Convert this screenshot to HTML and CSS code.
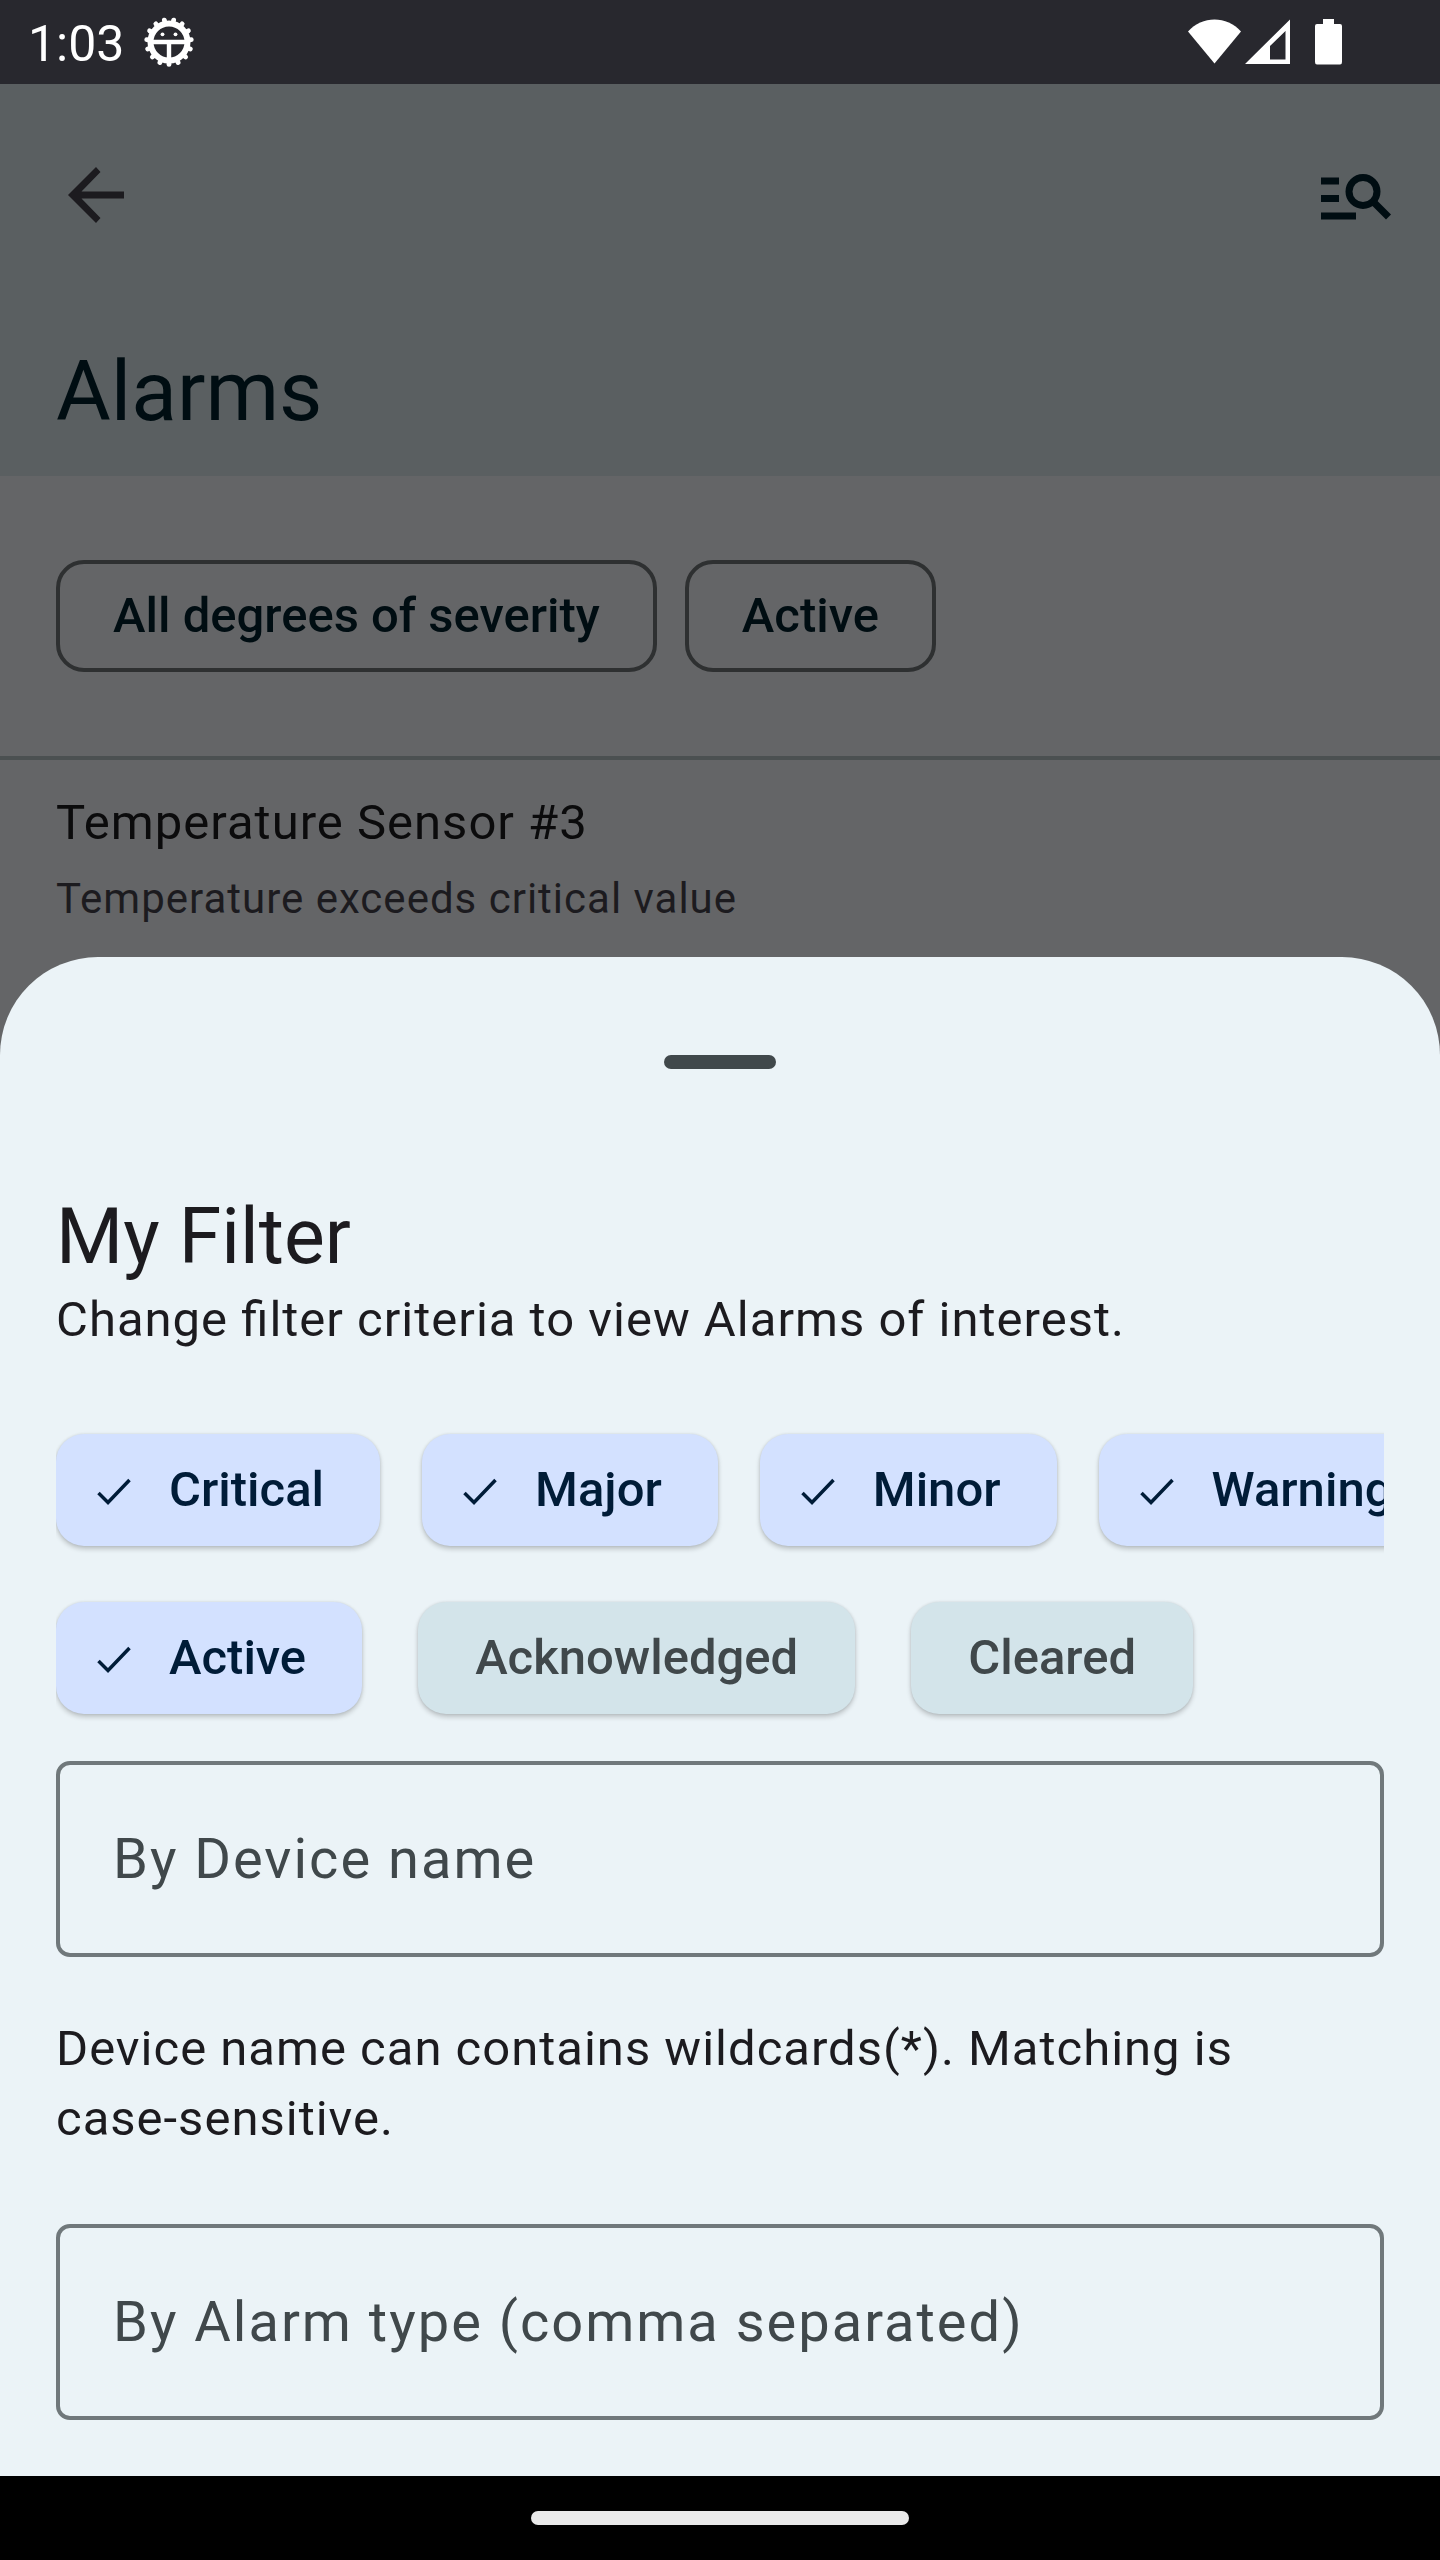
FILE: index.html
```html
<!DOCTYPE html>
<html lang="en">
<head>
<meta charset="utf-8">
<meta name="viewport" content="width=device-width, initial-scale=1">
<title>Alarms</title>
<link rel="stylesheet" href="styles.css">
</head>
<body>
<div class="screen">
  <div class="status-bar">
    <div class="status-left">
      <span class="clock">1:03</span>
      <svg class="gear-icon" viewBox="0 0 50 50" aria-hidden="true">
        <circle cx="25" cy="25" r="18.5" fill="none" stroke="#fff" stroke-width="6"/>
        <g stroke="#fff" stroke-width="4.8" stroke-linecap="round">
          <path d="M25 44V47.4" />
          <path d="M25 44V47.4" transform="rotate(24 25 25)"/>
          <path d="M25 44V47.4" transform="rotate(48 25 25)"/>
          <path d="M25 44V47.4" transform="rotate(72 25 25)"/>
          <path d="M25 44V47.4" transform="rotate(96 25 25)"/>
          <path d="M25 44V47.4" transform="rotate(120 25 25)"/>
          <path d="M25 44V47.4" transform="rotate(144 25 25)"/>
          <path d="M25 44V47.4" transform="rotate(168 25 25)"/>
          <path d="M25 44V47.4" transform="rotate(192 25 25)"/>
          <path d="M25 44V47.4" transform="rotate(216 25 25)"/>
          <path d="M25 44V47.4" transform="rotate(240 25 25)"/>
          <path d="M25 44V47.4" transform="rotate(264 25 25)"/>
          <path d="M25 44V47.4" transform="rotate(288 25 25)"/>
          <path d="M25 44V47.4" transform="rotate(312 25 25)"/>
          <path d="M25 44V47.4" transform="rotate(336 25 25)"/>
        </g>
        <path d="M8 25H42M25 25V43" stroke="#fff" stroke-width="4.4"/>
        <circle cx="18.5" cy="17.3" r="1.9" fill="#fff"/>
        <circle cx="31.5" cy="17.3" r="1.9" fill="#fff"/>
      </svg>
    </div>
    <svg class="system-icons" viewBox="0 0 156 48" aria-hidden="true">
      <path d="M0 13.5C14-2.500 39-2.500 53 13.500L26.500 45.500Z" fill="#fff"/>
      <path fill-rule="evenodd" d="M57 46L102 1.500V46ZM82 28V41.500H97.500V13Z" fill="#fff"/>
      <path d="M135 1H146V6H152Q154 6 154 8V44Q154 46.500 152 46.500H129Q127 46.500 127 44V8Q127 6 129 6H135Z" fill="#fff"/>
    </svg>
  </div>

  <header class="app-bar">
    <div class="toolbar">
      <button class="icon-button" type="button" aria-label="Back">
        <svg class="back-icon" viewBox="0 0 56 56" aria-hidden="true">
          <path d="M56 24.500H13.500L32.500 5L28 0L0 28L28 56L32.500 51L13.500 31.500H56Z" fill="currentColor"/>
        </svg>
      </button>
      <button class="icon-button" type="button" aria-label="Filter alarms">
        <svg class="filter-icon" viewBox="0 -4 70 50" aria-hidden="true">
          <path d="M0 3.500H18V10.500H0ZM0 21H18V28H0ZM0 38.500H35V45.500H0Z" fill="currentColor"/>
          <circle cx="42" cy="17.500" r="14" fill="none" stroke="currentColor" stroke-width="7"/>
          <path d="M52 27.500L67.500 43" stroke="currentColor" stroke-width="7"/>
        </svg>
      </button>
    </div>
    <h1 class="page-title">Alarms</h1>
  </header>

  <main class="content">
    <div class="summary">
      <button class="outlined" type="button">All degrees of severity</button>
      <button class="outlined" type="button">Active</button>
    </div>
    <article class="alarm">
      <h2 class="alarm-source">Temperature Sensor #3</h2>
      <p class="alarm-text">Temperature exceeds critical value</p>
    </article>
  </main>

  <section class="sheet" aria-labelledby="sheet-title">
    <div class="handle"></div>
    <h2 class="sheet-title" id="sheet-title">My Filter</h2>
    <p class="body-text">Change filter criteria to view Alarms of interest.</p>

    <div class="chips severity">
      <button class="chip selected" type="button" aria-pressed="true"><svg class="check" viewBox="0 -4 34 32" aria-hidden="true"><path d="M1.500 15L11 24.500L32.500 2" fill="none" stroke="currentColor" stroke-width="3.500"/></svg>Critical</button>
      <button class="chip selected" type="button" aria-pressed="true"><svg class="check" viewBox="0 -4 34 32" aria-hidden="true"><path d="M1.500 15L11 24.500L32.500 2" fill="none" stroke="currentColor" stroke-width="3.500"/></svg>Major</button>
      <button class="chip selected" type="button" aria-pressed="true"><svg class="check" viewBox="0 -4 34 32" aria-hidden="true"><path d="M1.500 15L11 24.500L32.500 2" fill="none" stroke="currentColor" stroke-width="3.500"/></svg>Minor</button>
      <button class="chip selected" type="button" aria-pressed="true"><svg class="check" viewBox="0 -4 34 32" aria-hidden="true"><path d="M1.500 15L11 24.500L32.500 2" fill="none" stroke="currentColor" stroke-width="3.500"/></svg>Warning</button>
    </div>

    <div class="chips state">
      <button class="chip selected" type="button" aria-pressed="true"><svg class="check" viewBox="0 -4 34 32" aria-hidden="true"><path d="M1.500 15L11 24.500L32.500 2" fill="none" stroke="currentColor" stroke-width="3.500"/></svg>Active</button>
      <button class="chip" type="button" aria-pressed="false">Acknowledged</button>
      <button class="chip" type="button" aria-pressed="false">Cleared</button>
    </div>

    <input class="field" type="text" placeholder="By Device name" aria-label="By Device name">
    <p class="body-text hint">Device name can contains wildcards(*). Matching is <span class="keep">case-sensitive.</span></p>
    <input class="field" type="text" placeholder="By Alarm type (comma separated)" aria-label="By Alarm type (comma separated)">
  </section>

  <footer class="nav-bar"><div class="pill"></div></footer>
</div>
</body>
</html>
```

FILE: styles.css
```css
* {
  box-sizing: border-box;
}

body {
  margin: 0;
  background: #646567;
  font-family: Roboto, "Noto Sans", sans-serif;
  font-size: 49px;
  line-height: 70px;
  color: #1c1b1f;
}

h1, h2, p {
  margin: 0;
  font-weight: 400;
}

button, input {
  margin: 0;
  font: inherit;
}

button {
  cursor: pointer;
}

svg {
  display: block;
  flex: none;
}

.screen {
  display: flex;
  flex-direction: column;
  min-height: 100vh;
}

/* Status bar */
.status-bar {
  display: flex;
  align-items: center;
  justify-content: space-between;
  height: 84px;
  padding: 0 96px 0 28px;
  background: #28282e;
  color: #fff;
}

.status-left {
  display: flex;
  align-items: center;
  gap: 20px;
}

.clock {
  padding-top: 4px;
  font-size: 50px;
}

.gear-icon {
  width: 50px;
  height: 50px;
}

.system-icons {
  width: 156px;
  height: 48px;
}

/* App bar */
.app-bar {
  height: 392px;
  background: #5a5f61;
}

.toolbar {
  display: flex;
  align-items: center;
  justify-content: space-between;
  height: 222px;
  padding: 0 49px 0 67px;
}

.icon-button {
  padding: 0;
  border: 0;
  background: none;
  color: #1c1b1f;
}

.back-icon {
  width: 58px;
  height: 56px;
}

.filter-icon {
  width: 70px;
  height: 50px;
  color: #000d12;
}

.page-title {
  padding: 36px 56px 0;
  font-size: 84px;
  line-height: 100px;
  color: #000d12;
}

/* Alarm list */
.content {
  flex: 1;
}

.summary {
  display: flex;
  gap: 28px;
  padding: 84px 56px;
  border-bottom: 4px solid #4b5051;
}

.outlined {
  height: 112px;
  padding: 0 53px;
  border: 4px solid #2e3031;
  border-radius: 28px;
  background: none;
  font-weight: 500;
  color: #000d12;
}

.alarm {
  padding: 28px 56px 30px;
}

.alarm-source {
  font-size: 49px;
  color: #0b0b0c;
  letter-spacing: 1px;
}

.alarm-text {
  padding-top: 13px;
  font-size: 42px;
  line-height: 56px;
  color: #1c1b1f;
  letter-spacing: 1px;
}

/* Bottom sheet */
.sheet {
  display: flex;
  flex-direction: column;
  padding: 98px 56px 56px;
  border-radius: 98px 98px 0 0;
  background: #ebf3f7;
}

.handle {
  align-self: center;
  width: 112px;
  height: 14px;
  border-radius: 7px;
  background: #40484b;
}

.sheet-title {
  padding-top: 120px;
  font-size: 77px;
  line-height: 96px;
}

.body-text {
  font-feature-settings: "liga" 1;
  letter-spacing: 1px;
}

.keep {
  white-space: nowrap;
}

.chips {
  display: flex;
  margin-bottom: -24px;
  padding-bottom: 24px;
  overflow: hidden;
}

.severity {
  gap: 42px;
  padding-top: 79px;
}

.state {
  gap: 56px;
  padding-top: 56px;
}

.chip {
  display: flex;
  flex: none;
  align-items: center;
  height: 112px;
  padding: 0 57px;
  border: 0;
  border-radius: 28px;
  background: #d3e4ea;
  box-shadow: 0 3px 5px rgba(0, 0, 0, 0.2), 0 0 3px rgba(0, 0, 0, 0.1);
  font-weight: 500;
  color: #40484b;
}

.chip.selected {
  gap: 38px;
  padding: 0 56px 0 41px;
  background: #d3e1ff;
  color: #001c38;
}

.check {
  width: 34px;
  height: 32px;
}

.field {
  width: 100%;
  height: 196px;
  margin-top: 47px;
  padding: 0 53px;
  border: 4px solid #70787b;
  border-radius: 14px;
  background: none;
  font-size: 56px;
  color: #1c1b1f;
  letter-spacing: 2px;
}

.field::placeholder {
  color: #40484b;
  opacity: 1;
}

.hint {
  padding-top: 57px;
}

.hint + .field {
  margin-top: 70px;
}

/* Gesture navigation */
.nav-bar {
  display: flex;
  align-items: center;
  justify-content: center;
  height: 84px;
  background: #000;
}

.pill {
  width: 378px;
  height: 14px;
  border-radius: 7px;
  background: #eaeaea;
}
```
